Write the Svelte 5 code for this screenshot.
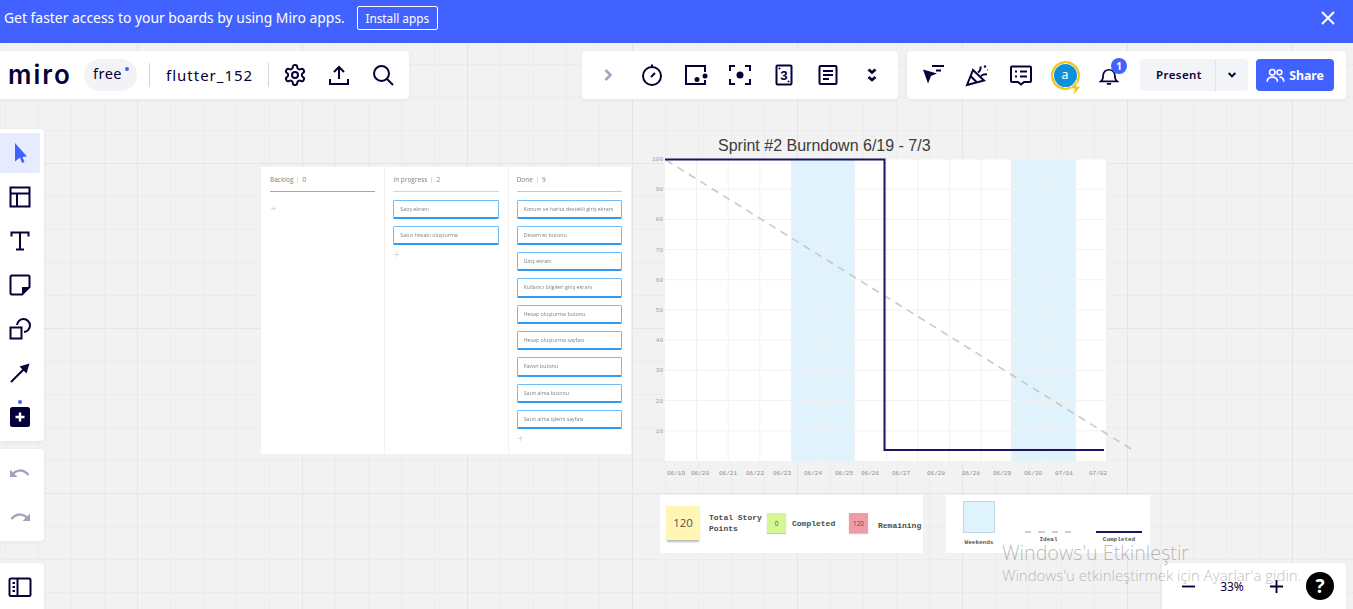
<script>
  const inProgress = ['Satış ekranı', 'Satıcı hesabı oluşturma'];
  const done = [
    'Konum ve harita destekli giriş ekranı',
    'Devam et butonu',
    'Giriş ekranı',
    'Kullanıcı bilgileri giriş ekranı',
    'Hesap oluşturma butonu',
    'Hesap oluşturma sayfası',
    'Favori butonu',
    'Satın alma butonu',
    'Satın alma işlemi sayfası'
  ];
  const columns = [
    { name: 'Backlog', count: 0, tone: 'red', cards: [] },
    { name: 'In progress', count: 2, tone: 'yellow', cards: inProgress },
    { name: 'Done', count: 9, tone: 'green', cards: done }
  ];
  const yLabels = [100, 90, 80, 70, 60, 50, 40, 30, 20, 10];
  const yLines = yLabels.map((_, i) => 159 + i * 30.2);
  const xLines = Array.from({ length: 14 }, (_, i) => 665 + (i + 1) * 31.6);
  const dates = [
    ['06/19', 676], ['06/20', 700], ['06/21', 728], ['06/22', 755], ['06/23', 782],
    ['06/24', 813], ['06/25', 844], ['06/26', 870], ['06/27', 901], ['06/28', 936],
    ['06/28', 971], ['06/29', 1002], ['06/30', 1033], ['07/01', 1064], ['07/02', 1098]
  ];
</script>

<div class="page">
  <header class="banner">
    <span class="banner-text">Get faster access to your boards by using Miro apps.</span>
    <button class="install">Install apps</button>
    <svg class="close" viewBox="0 0 14 14"><path d="M1 1l12 12M13 1L1 13" /></svg>
  </header>

  <main class="canvas">
    <section class="kanban">
      {#each columns as col}
        <div class="col">
          <div class="col-head {col.tone}">
            <span>{col.name}</span><i></i><span>{col.count}</span>
          </div>
          {#each col.cards as card}
            <div class="card">{card}</div>
          {/each}
          <svg class="add" viewBox="0 0 7 7"><path d="M3.500 0v7M0 3.500h7" /></svg>
        </div>
      {/each}
    </section>

    <svg class="chart" viewBox="640 130 500 355" width="500" height="355">
      <text class="title" x="718" y="151">Sprint #2 Burndown 6/19 - 7/3</text>
      <rect x="665" y="159" width="441" height="302" fill="#fff" stroke="none" />
      <rect x="791" y="159" width="63.5" height="302" fill="#e0f3fc" stroke="none" />
      <rect x="1011" y="159" width="64" height="302" fill="#e0f3fc" stroke="none" />
      {#each yLines as y}
        <line x1="665" x2="1106" y1={y} y2={y} class="gridline" />
      {/each}
      {#each xLines as x}
        <line x1={x} x2={x} y1="159" y2="461" class="gridline" />
      {/each}
      {#each yLabels as label, i}
        <text class="ylabel" x="663" y={161 + i * 30.2}>{label}</text>
      {/each}
      {#each dates as [label, x]}
        <text class="xlabel" {x} y="474.5">{label}</text>
      {/each}
      <line x1="666" y1="160" x2="1131" y2="449" class="ideal" />
      <path d="M665 159.5H884.5V450H1104" class="completed" />
    </svg>

    <section class="legend-a">
      <div class="sticky yellow">120</div>
      <div class="legend-text total">Total Story<br />Points</div>
      <div class="sticky small lime">0</div>
      <div class="legend-text done-l">Completed</div>
      <div class="sticky small pink">120</div>
      <div class="legend-text rem">Remaining</div>
    </section>

    <section class="legend-b">
      <div class="legend-item weekends"><div class="swatch"></div><span>Weekends</span></div>
      <div class="legend-item ideal-l"><div class="dash"></div><span>Ideal</span></div>
      <div class="legend-item comp-l"><div class="solid"></div><span>Completed</span></div>
    </section>
  </main>

  <div class="panel top-left">
    <span class="logo">miro</span>
    <span class="pill">free<b></b></span>
    <i class="sep first"></i>
    <span class="board">flutter_152</span>
    <i class="sep second"></i>
    <button class="tool"><svg viewBox="0 0 24 24"><path d="M12.22 2h-.44a2 2 0 0 0-2 2v.18a2 2 0 0 1-1 1.73l-.43.25a2 2 0 0 1-2 0l-.15-.08a2 2 0 0 0-2.73.73l-.22.38a2 2 0 0 0 .73 2.73l.15.1a2 2 0 0 1 1 1.72v.51a2 2 0 0 1-1 1.74l-.15.09a2 2 0 0 0-.73 2.73l.22.38a2 2 0 0 0 2.73.73l.15-.08a2 2 0 0 1 2 0l.43.25a2 2 0 0 1 1 1.73V20a2 2 0 0 0 2 2h.44a2 2 0 0 0 2-2v-.18a2 2 0 0 1 1-1.73l.43-.25a2 2 0 0 1 2 0l.15.08a2 2 0 0 0 2.73-.73l.22-.39a2 2 0 0 0-.73-2.73l-.15-.08a2 2 0 0 1-1-1.74v-.5a2 2 0 0 1 1-1.74l.15-.09a2 2 0 0 0 .73-2.73l-.22-.38a2 2 0 0 0-2.73-.73l-.15.08a2 2 0 0 1-2 0l-.43-.25a2 2 0 0 1-1-1.73V4a2 2 0 0 0-2-2z" /><circle cx="12" cy="12" r="3" /></svg></button>
    <button class="tool"><svg viewBox="0 0 24 24"><path d="M12 16V4M7 9l5-5 5 5M3 16v5h18v-5" /></svg></button>
    <button class="tool"><svg viewBox="0 0 24 24"><circle cx="10.500" cy="10.500" r="7.500" /><path d="M16 16l6 6" /></svg></button>
  </div>

  <div class="panel top-mid">
    <button class="tool"><svg class="muted" viewBox="0 0 24 24"><path d="M9.500 7l5 5-5 5" /></svg></button>
    <button class="tool"><svg viewBox="0 0 24 24"><circle cx="12" cy="13" r="9" /><path d="M12 1.500v2.500M11 14l4-4" /></svg></button>
    <button class="tool"><svg viewBox="0 0 24 24"><path d="M21 9V3H2v18h19v-4" /><circle class="fill" cx="13" cy="16.500" r="2.500" /><circle class="fill" cx="21" cy="13" r="2.500" /></svg></button>
    <button class="tool"><svg viewBox="0 0 24 24"><path d="M7 3H2v5M17 3h5v5M22 16v5h-5M7 21H2v-5" /><circle class="fill" cx="12" cy="12" r="3.500" /></svg></button>
    <button class="tool"><svg viewBox="0 0 24 24"><rect x="4.500" y="2.500" width="15" height="19" rx="1" /><circle class="fill" cx="7.500" cy="5.500" r="1" /><circle class="fill" cx="16.500" cy="18.500" r="1" /><text class="three" x="12" y="16.500">3</text></svg></button>
    <button class="tool"><svg viewBox="0 0 24 24"><rect x="3.500" y="3" width="17" height="18" rx="1" /><path d="M7 8h10M7 12h10M7 16h6" /></svg></button>
    <button class="tool"><svg class="heavy" viewBox="0 0 24 24"><path d="M8.500 6.500l3.500 3 3.500-3M8.500 14l3.500 3 3.500-3" /></svg></button>
  </div>

  <div class="panel top-right">
    <button class="tool"><svg viewBox="0 0 24 24"><path class="fill" d="M2 6.500l14 4-6 2.500-3 7.500z" /><path d="M11 3h12M15 7.500h5" /></svg></button>
    <button class="tool"><svg viewBox="0 0 24 24"><path d="M2 22L8 7l11 10.500zM5.500 13l6 6M13 9.500c2-1.500 3-3.500 2.500-6M16 13c2-1.500 3.500-2 6-1.500M19.500 2.500l1 2M22 7h.5" /></svg></button>
    <button class="tool"><svg viewBox="0 0 24 24"><path d="M3 3.500h18a1 1 0 0 1 1 1V18a1 1 0 0 1-1 1h-6l-3 2.500L9 19H3a1 1 0 0 1-1-1V4.500a1 1 0 0 1 1-1z" /><path d="M6 8.500h2M11 8.500h7M6 13.500h2M11 13.500h7" /></svg></button>
    <div class="avatar-cell">
      <span class="avatar">a</span>
      <svg class="bolt" viewBox="0 0 12 14"><path d="M7 0L1 8h4l-1 6 7-8H7z" /></svg>
    </div>
    <div class="bell-cell">
      <svg viewBox="0 0 24 24"><path d="M2 18.500c3-2 3-4 3-7a7 7 0 0 1 14 0c0 3 0 5 3 7zM9.500 21.500h5" /></svg>
      <span class="badge">1</span>
    </div>
    <div class="present">
      <span class="present-label">Present</span>
      <span class="present-caret"><svg viewBox="0 0 24 24"><path d="M7 9l5 5 5-5" /></svg></span>
    </div>
    <button class="share">
      <svg viewBox="0 0 24 24"><circle cx="8" cy="8" r="3.500" /><circle cx="17" cy="8" r="3" /><path d="M1.500 20c0-4 3-6 6.500-6s6.500 2 6.500 6M17 14c3 0 5.500 2 5.500 6" /></svg>
      Share
    </button>
  </div>

  <div class="panel left-tools">
    <button class="side active"><svg viewBox="0 0 24 24"><path class="blue" d="M7 2l12 13.500-4.500.5 2 5-2.500 1-2-5.500L7 20.500z" /></svg></button>
    <button class="side"><svg viewBox="0 0 24 24"><rect x="2.500" y="2.500" width="19" height="19" /><path d="M2.500 8.500h19M9 8.500v13" /></svg></button>
    <button class="side"><svg viewBox="0 0 24 24"><path d="M3.500 7.500V3.500h17v4M12 3.500v17M8 20.500h8" /></svg></button>
    <button class="side"><svg viewBox="0 0 24 24"><path d="M4 2.500h16.500a1 1 0 0 1 1 1V14l-7.500 7.500H4a1.500 1.500 0 0 1-1.500-1.500V4A1.500 1.500 0 0 1 4 2.500z" /><path class="fill" d="M21.500 14H14v7.500z" /></svg></button>
    <button class="side"><svg viewBox="0 0 24 24"><rect x="2.500" y="10.500" width="11" height="11" /><path d="M9 8a6.500 6.500 0 1 1 7 7" /></svg></button>
    <button class="side"><svg viewBox="0 0 24 24"><path d="M3 21L17 7" /><path class="fill" d="M21.500 2.500l-3 10-7-7z" /></svg></button>
    <button class="side"><svg viewBox="0 0 24 24"><circle class="blue" cx="12" cy="-3" r="2" /><rect class="fill" x="2" y="2" width="20" height="20" rx="2.500" /><path class="white" d="M12 7.500v9M7.500 12h9" /></svg></button>
  </div>

  <div class="panel history">
    <button class="side"><svg class="muted" viewBox="0 0 24 24"><path d="M3.500 15c4-7 12-7 17-1" /><path class="mutedfill" d="M2 8.500v7.500h7.500z" /></svg></button>
    <button class="side"><svg class="muted" viewBox="0 0 24 24"><path d="M20.500 15c-4-7-12-7-17-1" /><path class="mutedfill" d="M22 8.500v7.500h-7.500z" /></svg></button>
  </div>

  <div class="panel pages">
    <button class="side"><svg viewBox="0 0 24 24"><rect x="1.500" y="3.500" width="21" height="17.500" rx="1.500" /><path d="M9.500 3.500v17.500M4.500 8h2.500M4.500 12h2.500M4.500 16h2.500" /></svg></button>
  </div>

  <div class="panel zoom">
    <svg class="zoom-icon" viewBox="0 0 16 16"><path d="M1 8h14" /></svg>
    <span class="pct">33%</span>
    <svg class="zoom-icon" viewBox="0 0 16 16"><path d="M1 8h14M8 1v14" /></svg>
    <span class="help">?</span>
  </div>

  <div class="watermark">
    <div class="wm-title">Windows'u Etkinleştir</div>
    <div class="wm-sub">Windows'u etkinleştirmek için Ayarlar'a gidin.</div>
  </div>
</div>

<style>
  :global(body) { margin: 0; background: #f2f2f2; }
  .page {
    position: relative;
    width: 1353px;
    height: 609px;
    overflow: hidden;
    display: flex;
    flex-direction: column;
    font-family: "Noto Sans", sans-serif;
    color: #050038;
  }
  button { border: 0; background: none; padding: 0; font: inherit; color: inherit; }
  svg { display: block; fill: none; stroke: #050038; stroke-width: 2; }
  svg .fill { fill: #050038; stroke: none; }
  svg .blue { fill: #4262ff; stroke: none; }
  svg .white { stroke: #fff; stroke-width: 2.500; }
  svg.muted { stroke: #a5a3bd; stroke-width: 2.500; }
  svg.heavy { stroke-width: 2.800; }
  svg .mutedfill { fill: #a5a3bd; stroke: none; }

  .banner {
    flex: 0 0 43px;
    display: flex;
    align-items: flex-start;
    background: #4262ff;
    color: #fff;
    padding-left: 4px;
    box-sizing: border-box;
  }
  .banner-text { font-size: 13.900px; line-height: 19px; margin-top: 8px; }
  .install {
    margin: 6px 0 0 12px;
    width: 81px;
    height: 24px;
    border: 1px solid #fff;
    border-radius: 2px;
    color: #fff;
    font-size: 11.800px;
    box-sizing: border-box;
  }
  .close { width: 14px; height: 14px; stroke: #fff; margin: 11px 18px 0 auto; }

  .canvas {
    position: relative;
    flex: 1;
    background-color: #f2f2f2;
    background-image:
      linear-gradient(#e5e5e5 1px, transparent 1px),
      linear-gradient(90deg, #e5e5e5 1px, transparent 1px),
      linear-gradient(#ececec 1px, transparent 1px),
      linear-gradient(90deg, #ececec 1px, transparent 1px);
    background-size: 165px 165px, 165px 165px, 33px 33px, 33px 33px;
    background-position: 0 120px, 137px 0, 0 21px, 5px 0;
  }

  .kanban { position: absolute; left: 261px; top: 124px; width: 370px; height: 287px; display: flex; gap: 1px; filter: blur(.3px); }
  .col { flex: 1; background: #fff; padding: 0 9px; box-sizing: border-box; font-family: "Open Sans", sans-serif; }
  .col + .col { padding-left: 8px; }
  .col-head {
    display: flex;
    align-items: center;
    height: 24.500px;
    padding-top: 2px;
    font-size: 6.500px;
    color: #808080;
    border-bottom: 1px solid;
    box-sizing: border-box;
    margin-bottom: 8px;
  }
  .col-head i { width: 1px; height: 6px; background: #ddd; margin: 0 4px; }
  .col-head.red { border-color: #ee8a7c; }
  .col-head.yellow { border-color: #f5d67e; }
  .col-head.green { border-color: #b4dd91; }
  .card {
    height: 19.300px;
    margin-bottom: 7px;
    box-sizing: border-box;
    border: 1px solid #6fbcf9;
    border-bottom: 2px solid #2f9bf4;
    border-radius: 1.500px;
    padding: 4px 0 0 6px;
    font-size: 5.300px;
    line-height: 8px;
    color: #808080;
    white-space: nowrap;
    overflow: hidden;
  }
  .add { width: 5px; height: 5px; stroke: #cfcfcf; stroke-width: 1; margin: 2.500px 0 0 1px; }
  .col:first-child .add { margin-top: 14px; }

  .chart { position: absolute; left: 640px; top: 87px; stroke: none; }
  .title { font: 16px "Liberation Sans", sans-serif; fill: #3c3c3c; stroke: none; }
  .gridline { stroke: #f1f1f1; stroke-width: 1; }
  .ylabel { font: 6px "Liberation Mono", monospace; fill: #a0a0a0; stroke: none; text-anchor: end; }
  .xlabel { font: 6px "Liberation Mono", monospace; fill: #8e8e8e; stroke: none; text-anchor: middle; }
  .ideal { stroke: #cbc8c8; stroke-width: 1.600; stroke-dasharray: 7.500 6; }
  .completed { stroke: #1b1464; stroke-width: 2; fill: none; }

  .legend-a {
    position: absolute; left: 660px; top: 452px; width: 263px; height: 58px;
    background: #fff;
    display: flex; align-items: center;
    padding-left: 6px; box-sizing: border-box;
    font-family: "Liberation Mono", monospace;
  }
  .sticky { display: flex; align-items: center; justify-content: center; color: #55534c; flex: none; font-family: "Open Sans", sans-serif; }
  .sticky.yellow { width: 34px; height: 34px; background: #fff6b5; font-size: 11.500px; box-shadow: 0 3px 2px -1px #b9b9b9; margin-top: -3px; }
  .sticky.small { width: 19px; height: 20px; box-shadow: 0 1px 1px #c9c9c9; font-size: 6.500px; margin-top: -2px; }
  .lime { background: #d5f692; }
  .pink { background: #f29aa5; }
  .legend-text { font-size: 8px; line-height: 11px; font-weight: 700; color: #4a4a4a; white-space: nowrap; }
  .total { margin: -3px 0 0 9px; width: 58px; }
  .done-l { margin: -2px 0 0 6px; width: 57px; }
  .rem { margin: 2px 0 0 10px; }

  .legend-b {
    position: absolute; left: 946px; top: 452px; width: 204px; height: 58px;
    background: #fff;
    font-family: "Liberation Mono", monospace;
    display: flex;
    align-items: flex-start;
  }
  .legend-item { display: flex; flex-direction: column; align-items: center; font-size: 6px; font-weight: 700; color: #555; }
  .swatch { width: 32px; height: 32px; box-sizing: border-box; background: #dff3fd; border: 1px solid #c5d6e6; margin-bottom: 6px; }
  .weekends { margin: 6px 0 0 17px; width: 32px; }
  .ideal-l { margin: 36px 0 0 30px; width: 47px; }
  .comp-l { margin: 36px 0 0 24px; width: 46px; }
  .dash { width: 47px; height: 2px; background: repeating-linear-gradient(90deg, #cdcdcd 0 6.500px, transparent 6.500px 13.300px); margin-bottom: 3px; }
  .solid { width: 46px; height: 2px; background: #1b1464; margin-bottom: 3px; }

  .panel {
    position: absolute;
    background: #fff;
    border-radius: 4px;
    box-shadow: 0 1px 4px rgba(5, 0, 56, .06);
    display: flex;
    box-sizing: border-box;
  }
  .tool { width: 44px; height: 48px; display: flex; align-items: center; justify-content: center; flex: none; }
  .tool svg { width: 24px; height: 24px; }

  .top-left { left: 0; top: 51px; width: 409px; height: 48px; align-items: center; padding-left: 8px; border-radius: 0 4px 4px 0; }
  .logo { font: 600 26px "Inter", sans-serif; width: 64px; letter-spacing: 2px; position: relative; top: -1px; }
  .pill {
    position: relative;
    margin-left: 12px;
    width: 53px; height: 32px;
    border-radius: 16px;
    background: #f2f2f7;
    font-size: 14.500px;
    line-height: 29px;
    padding-left: 9px;
    box-sizing: border-box;
    letter-spacing: .5px;
  }
  .pill b { position: absolute; left: 41px; top: 8px; width: 4px; height: 4px; border-radius: 50%; background: #4262ff; }
  .sep { width: 1px; height: 24px; background: #d4d4de; flex: none; }
  .sep.first { margin-left: 12px; }
  .board { margin-left: 16px; width: 86px; font-size: 15px; letter-spacing: 1px; white-space: nowrap; }
  .sep.second { margin-left: 16px; }
  .top-left .sep.second + .tool { margin-left: 4px; }

  .top-mid { left: 582px; top: 51px; width: 316px; height: 48px; padding-left: 4px; }
  .top-right { left: 907px; top: 51px; width: 439px; height: 48px; padding-left: 4px; align-items: center; }
  .avatar-cell, .bell-cell { position: relative; width: 44px; height: 48px; display: flex; align-items: center; justify-content: center; flex: none; }
  .avatar {
    width: 29px; height: 29px; box-sizing: border-box;
    border: 2px solid #fac710;
    border-radius: 50%;
    background: #0f8fd8;
    box-shadow: inset 0 0 0 1px #fff;
    color: #fff; font-size: 13px; line-height: 23px; text-align: center;
  }
  .bolt { position: absolute; left: 26px; top: 29px; width: 13px; height: 15px; fill: #fac710; stroke: #fff; stroke-width: .5; }
  .bell-cell svg { width: 20px; height: 20px; margin-top: 2px; }
  .badge {
    position: absolute; left: 24px; top: 7px;
    width: 16px; height: 16px; border-radius: 50%;
    background: #4262ff; color: #fff;
    font-size: 10px; font-weight: 700; line-height: 16px; text-align: center;
  }
  .present {
    margin-left: 9px; width: 108px; height: 32px;
    background: #f3f4f8; border-radius: 4px;
    display: flex; align-items: center;
    flex: none;
  }
  .present-label { width: 76px; padding-left: 3px; box-sizing: border-box; font-size: 11.500px; font-weight: 600; letter-spacing: .4px; text-align: center; line-height: 32px; border-right: 1px solid #e1e1e8; }
  .present-caret { flex: 1; display: flex; justify-content: center; }
  .present-caret svg { width: 16px; height: 16px; stroke-width: 3; }
  .share {
    margin-left: 8px; width: 78px; height: 32px;
    background: #4262ff; color: #fff; border-radius: 4px;
    display: flex; align-items: center; justify-content: center; gap: 4px;
    font-size: 12.300px; font-weight: 700;
    flex: none;
  }
  .share svg { width: 19px; height: 19px; stroke: #fff; }

  .left-tools { left: 0; top: 129px; width: 44px; height: 312px; flex-direction: column; padding-top: 2px; border-radius: 0 4px 4px 0; }
  .history { left: 0; top: 449px; width: 44px; height: 92px; flex-direction: column; padding-top: 2px; border-radius: 0 4px 4px 0; }
  .pages { left: 0; top: 563px; width: 44px; height: 46px; flex-direction: column; border-radius: 0 4px 0 0; padding-top: 2px; }
  .side { width: 40px; height: 44px; display: flex; align-items: center; justify-content: center; flex: none; }
  .side svg { width: 24px; height: 24px; overflow: visible; }
  .side.active { background: #e6ebff; height: 40px; margin: 2px 0; border-radius: 0 2px 2px 0; }

  .zoom { left: 1162px; top: 563px; width: 184px; height: 46px; align-items: center; padding-left: 19px; border-radius: 4px 4px 0 0; }
  .zoom-icon { width: 15px; height: 15px; flex: none; }
  .pct { width: 44px; margin: 0 14.500px 0 14px; text-align: center; font-size: 12px; }
  .help {
    margin-left: 22.500px; width: 28px; height: 28px; border-radius: 50%;
    background: #000; color: #fff;
    font-size: 19px; font-weight: 700; line-height: 28px; text-align: center;
    flex: none;
  }

  .watermark {
    position: absolute; left: 1002px; top: 540px;
    color: rgba(130, 130, 130, .55);
    font-family: "Open Sans", sans-serif;
    white-space: nowrap;
    pointer-events: none;
  }
  .wm-title { font-size: 19.700px; font-weight: 300; line-height: 26px; }
  .wm-sub { font-size: 15px; font-weight: 300; line-height: 18px; margin-top: 0; }
  .three { font: 700 13px "Liberation Mono", monospace; fill: #050038; stroke: none; text-anchor: middle; }
</style>
